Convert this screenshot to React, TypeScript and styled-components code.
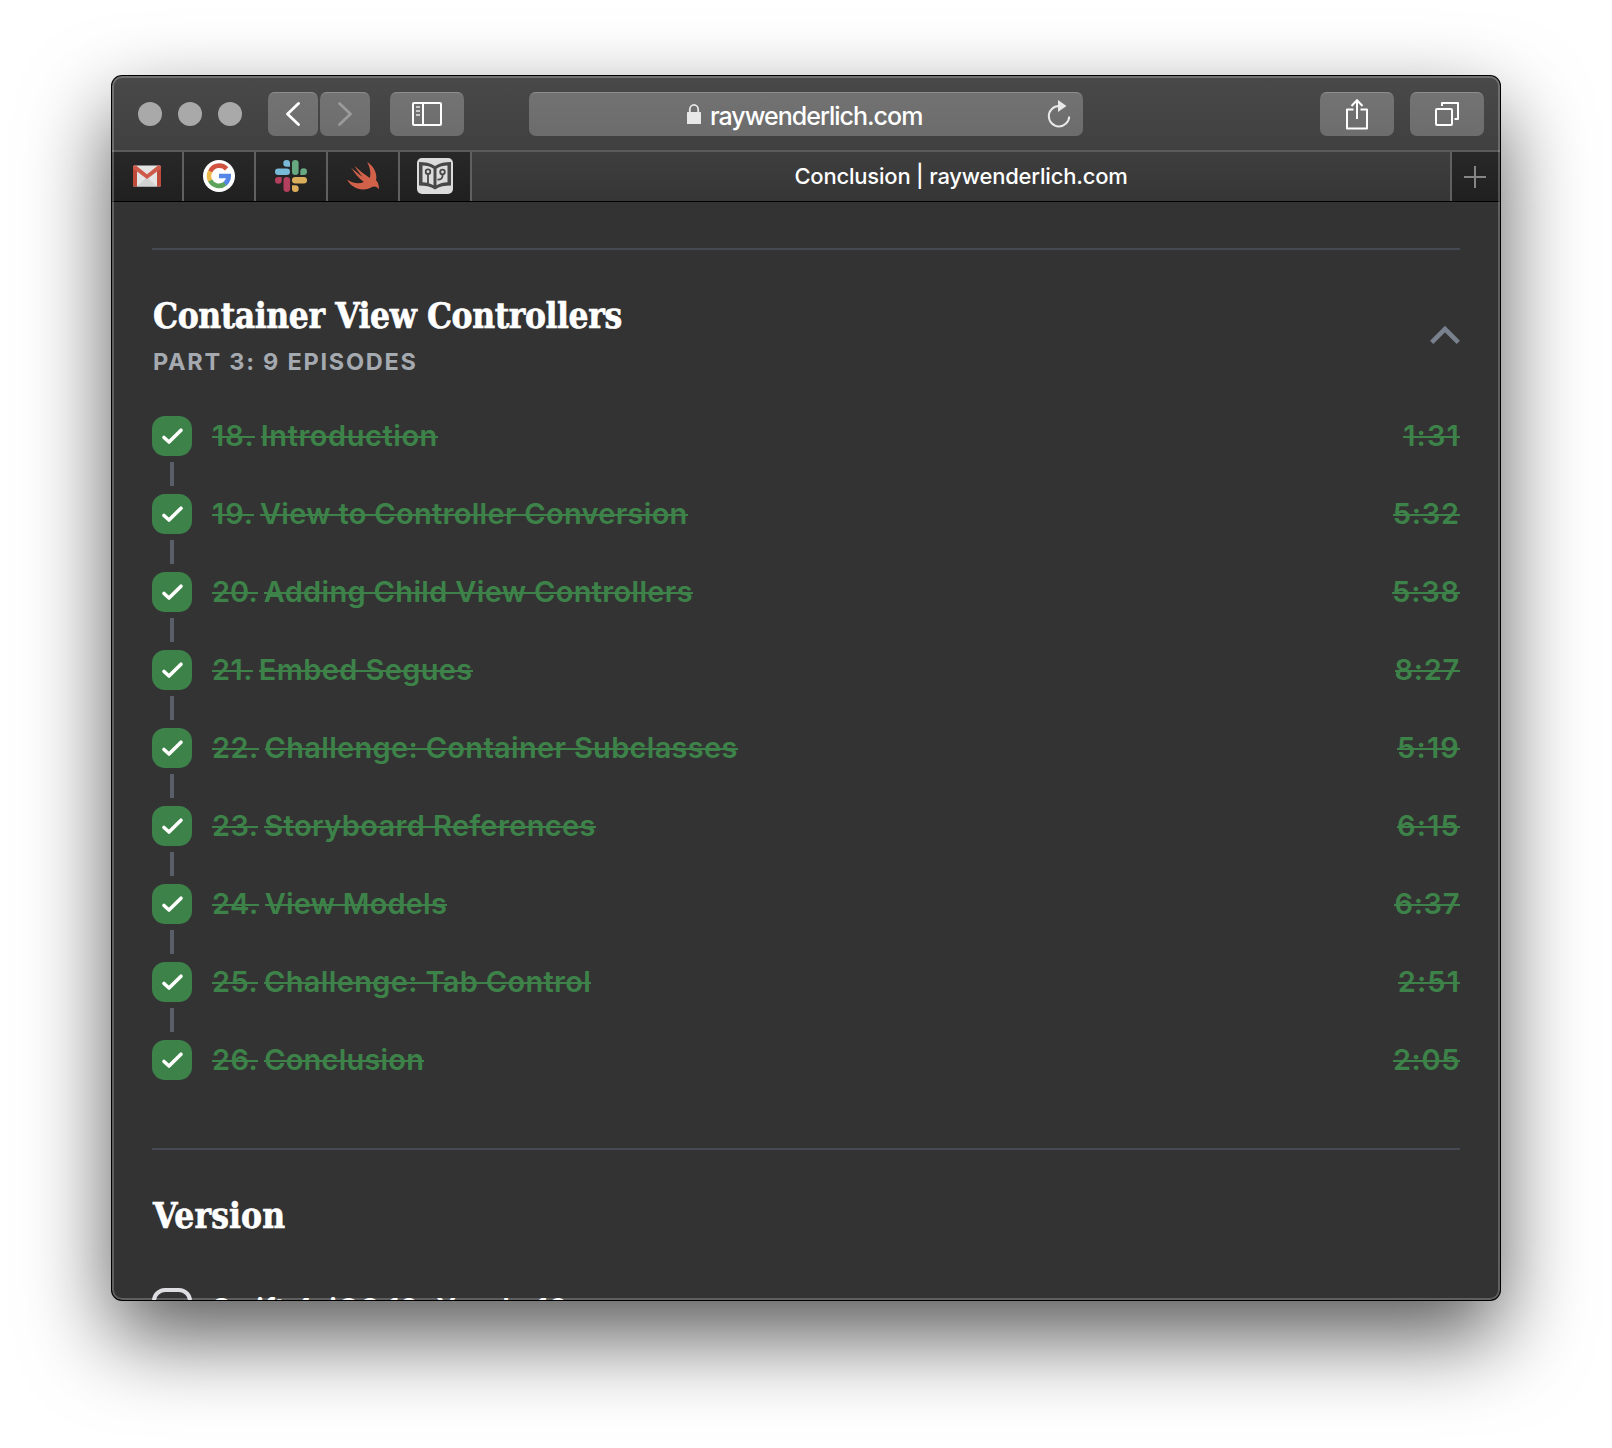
import React from "react";
import styled, { createGlobalStyle } from "styled-components";

const GlobalStyle = createGlobalStyle`
  * { box-sizing: border-box; }
  html, body { margin: 0; padding: 0; background: #fff; overflow: hidden; }
  body { font-family: Inter, "Liberation Sans", sans-serif; -webkit-font-smoothing: antialiased; }
`;

const Desktop = styled.div`
  width: 1612px;
  height: 1448px;
  padding: 76px 112px 148px;
  background: #fff;
  overflow: hidden;
`;

const BrowserWindow = styled.div`
  position: relative;
  display: flex;
  flex-direction: column;
  width: 1388px;
  height: 1224px;
  border-radius: 10px;
  overflow: hidden;
  background: #333;
  box-shadow: 0 0 0 1px #000, 0 36px 86px rgba(0, 0, 0, 0.66);

  &::after {
    content: "";
    position: absolute;
    inset: 0;
    border: 2px solid rgba(255, 255, 255, 0.22);
    border-radius: 10px;
    pointer-events: none;
  }
`;

const Toolbar = styled.header`
  display: flex;
  align-items: center;
  flex: none;
  height: 76px;
  padding: 0 16px 0 26px;
  background: linear-gradient(#494949, #404040);
  border-bottom: 2px solid #5a5a5a;
`;

const TrafficLights = styled.div`
  display: flex;
  gap: 16px;
  margin: 2px 26px 0 0;
`;

const Light = styled.span`
  width: 24px;
  height: 24px;
  border-radius: 50%;
  background: #a9a9a9;
`;

const ToolButton = styled.button<{ $w: number; $gap?: number }>`
  display: flex;
  align-items: center;
  justify-content: center;
  flex: none;
  width: ${(p) => p.$w}px;
  height: 44px;
  margin: 2px ${(p) => p.$gap ?? 0}px 0 0;
  padding: 0;
  border: 0;
  border-radius: 7px;
  background: linear-gradient(#737373, #6d6d6d);
  box-shadow: inset 0 2px 0 -1px #8d8d8d;
`;

const AddressBar = styled.div`
  display: flex;
  align-items: center;
  width: 554px;
  height: 44px;
  margin: 2px auto 0 65px;
  padding: 0 12px 0 158px;
  border-radius: 7px;
  background: linear-gradient(#727272, #6c6c6c);
  box-shadow: inset 0 2px 0 -1px #8d8d8d;
`;

const Host = styled.span`
  flex: 1;
  margin-left: 9px;
  padding-top: 3px;
  color: #fff;
  font-size: 25px;
  font-weight: 450;
  letter-spacing: -1px;
  white-space: nowrap;
`;

const TabBar = styled.nav`
  display: flex;
  flex: none;
  height: 50px;
  background: linear-gradient(#282828, #202020);
  border-bottom: 1px solid #000;
`;

const PinnedTab = styled.div`
  display: flex;
  align-items: center;
  justify-content: center;
  width: 72px;
  padding-bottom: 1px;
  border-right: 2px solid #606060;
`;

const ActiveTab = styled.div`
  display: flex;
  align-items: center;
  justify-content: center;
  flex: 1;
  padding: 0 0 2px;
  color: #fff;
  background: linear-gradient(#3e3e3e, #363636);
  border-right: 2px solid #606060;
  font-size: 22px;
  font-weight: 500;
  letter-spacing: -0.2px;
  white-space: nowrap;
`;

const NewTab = styled.div`
  display: flex;
  align-items: center;
  justify-content: center;
  width: 48px;
  padding-right: 2px;
`;

const Page = styled.main`
  flex: 1;
  min-height: 0;
  padding: 46px 40px 0;
  overflow: hidden;
`;

const Section = styled.section`
  border-top: 2px solid #444952;
`;

const SectionHeader = styled.div`
  display: flex;
  justify-content: space-between;
  height: 166px;
  padding-top: 44px;
`;

const Title = styled.h2<{ $spacing: number }>`
  margin: 0 0 0 1px;
  color: #fff;
  font-family: "DejaVu Serif Condensed", "DejaVu Serif", serif;
  font-size: 35px;
  font-weight: 700;
  font-stretch: condensed;
  line-height: 44px;
  letter-spacing: ${(p) => p.$spacing}px;
  white-space: nowrap;
  -webkit-text-stroke: 0.6px #fff;
`;

const Subtitle = styled.p`
  margin: 10px 0 0 1px;
  color: #a5a9b0;
  font-size: 23.500px;
  font-weight: 650;
  line-height: 28px;
  letter-spacing: 1.750px;
  white-space: nowrap;
`;

const Collapse = styled.div`
  padding-top: 31px;
  line-height: 0;
`;

const Episodes = styled.ol`
  margin: 0;
  padding: 0;
  height: 732px;
  list-style: none;
`;

const Episode = styled.li`
  position: relative;
  display: flex;
  align-items: center;
  height: 40px;
  margin-bottom: 38px;
  color: #3d8249;
  font-size: 29px;
  font-weight: 560;

  &:not(:last-child)::after {
    content: "";
    position: absolute;
    left: 18px;
    top: 46px;
    width: 4px;
    height: 24px;
    background: #5a5e68;
  }
`;

const Check = styled.span`
  display: flex;
  width: 40px;
  height: 40px;
  margin-right: 20px;
  border-radius: 13px;
  background: #3d8249;
`;

const Struck = styled.span<{ $spacing: number }>`
  letter-spacing: ${(p) => p.$spacing}px;
  line-height: 40px;
  white-space: nowrap;
  background: linear-gradient(currentColor, currentColor) 0 20px / 100% 2px no-repeat;
`;

const EpisodeName = styled.span`
  display: flex;
  flex: 1;
  gap: 6px;
`;

const VersionHeader = styled.div`
  height: 138px;
  padding-top: 44px;
`;

const VersionRow = styled.div`
  display: flex;
  align-items: center;
  height: 40px;
  gap: 20px;
  color: #fff;
  font-size: 29px;
  font-weight: 560;
  letter-spacing: 0.500px;
  white-space: nowrap;
`;

const EmptyBox = styled.span`
  width: 40px;
  height: 40px;
  border: 4px solid #dcdce1;
  border-radius: 13px;
`;

const episodes = [
  { n: 18, name: "Introduction", time: "1:31", ns: 1.1, s: 0.55, t: 1.15 },
  { n: 19, name: "View to Controller Conversion", time: "5:32", ns: 0.9, s: 0.3, t: 0.8 },
  { n: 20, name: "Adding Child View Controllers", time: "5:38", ns: 0, s: 0.33, t: 0.85 },
  { n: 21, name: "Embed Segues", time: "8:27", ns: 0.4, s: 0.38, t: 0.7 },
  { n: 22, name: "Challenge: Container Subclasses", time: "5:19", ns: 0.4, s: 0.31, t: 1.15 },
  { n: 23, name: "Storyboard References", time: "6:15", ns: 0.4, s: 0.37, t: 1.15 },
  { n: 24, name: "View Models", time: "6:37", ns: 0.5, s: 0.19, t: 0.65 },
  { n: 25, name: "Challenge: Tab Control", time: "2:51", ns: 0.4, s: 0.33, t: 1.1 },
  { n: 26, name: "Conclusion", time: "2:05", ns: 0.4, s: 0.2, t: 0.6 },
];

const GmailIcon = () => (
  <svg width="28" height="22" viewBox="0 0 28 22">
    <rect width="28" height="21" y="0.5" rx="1.5" fill="#e4e4e4" />
    <path d="M4 21.500 14 12l10 9.500z" fill="#d2d2d2" />
    <path d="M4 6v15.500H1.500A1.500 1.500 0 0 1 0 20V2zM24 6v15.500h2.500A1.500 1.500 0 0 0 28 20V2z" fill="#bd4a3b" />
    <path d="M0 2C0 1 .7.5 1.500.5H3l11 8.700L25 .5h1.500C27.300.5 28 1 28 2v1.500L14 14 0 3.500z" fill="#cf5a4a" />
  </svg>
);

const GoogleIcon = () => (
  <svg width="32" height="32" viewBox="0 0 32 32">
    <circle cx="16" cy="16" r="16" fill="#fff" />
    <g fill="none" strokeWidth="4.600">
      <path d="M23.600 8.800A10 10 0 0 0 7.200 11.600" stroke="#d0523f" />
      <path d="M7.200 11.400a10 10 0 0 0 0 9.300" stroke="#efb94a" />
      <path d="M7.100 20.500A10 10 0 0 0 22.300 23.600" stroke="#5ca35c" />
      <path d="M22 23.800A10 10 0 0 0 25.700 16H16" stroke="#5585e6" />
    </g>
  </svg>
);

const SlackIcon = () => (
  <svg width="32" height="32" viewBox="0 0 32 32">
    <g fill="#79b9d8">
      <rect x="0" y="8.500" width="15" height="6.600" rx="3.300" />
      <path d="M15 6.700h-3.300A3.350 3.350 0 1 1 15 3.300z" />
    </g>
    <g fill="#67a981">
      <rect x="17" y="0" width="6.600" height="15" rx="3.300" />
      <path d="M25.300 15v-3.300a3.350 3.350 0 1 1 3.400 3.300z" />
    </g>
    <g fill="#dbae5c">
      <rect x="17" y="17" width="15" height="6.600" rx="3.300" />
      <path d="M17 25.300h3.300a3.350 3.350 0 1 1-3.300 3.400z" />
    </g>
    <g fill="#b13f5d">
      <rect x="8.500" y="17" width="6.600" height="15" rx="3.300" />
      <path d="M6.700 17v3.300A3.350 3.350 0 1 1 3.300 17z" />
    </g>
  </svg>
);

const SwiftIcon = () => (
  <svg width="32" height="28" viewBox="0 0 32 28">
    <path
      d="M20.200 0c7.200 4.800 10.300 12 8.800 18 2.300 2.900 3.500 6.500 2.600 9.300-1.600-2.900-4.400-3.300-7-2C15.500 30.300 5 26.500 0 17.500c5 3.500 11.400 5.100 16.800 2.500C11.500 16 7.200 10.500 4 5.500c3.500 3.300 7.500 6.600 11.600 9.300C12.700 11.700 9.800 7.800 7.500 3.800c4.700 4.500 9.600 8.500 15.300 12.200C24 11.500 23.200 5.500 20.200 0z"
      fill="#d2614a"
    />
  </svg>
);

const BookIcon = () => (
  <svg width="36" height="36" viewBox="0 0 36 36">
    <rect width="36" height="36" rx="5" fill="#dcdcdc" />
    <path d="M2 4c6 0 11 .8 16 4 5-3.200 10-4 16-4v23.500c-6 0-11.500.800-16 4-4.500-3.200-10-4-16-4z" fill="#484848" />
    <path d="M5.500 7.500c4 .2 7.800 1 11 3.300v16.500c-3.400-2-7-2.800-11-3zM30.500 7.500c-4 .2-7.800 1-11 3.300v16.500c3.400-2 7-2.800 11-3z" fill="#dcdcdc" />
    <g fill="none" stroke="#484848" strokeWidth="1.800">
      <circle cx="11" cy="13.700" r="2.300" />
      <path d="M11 16v9.500" />
      <circle cx="25.500" cy="14" r="2.300" />
      <path d="M25.500 16.300v2c0 2.500-2.500 3.500-5 3.200" />
    </g>
  </svg>
);

export default function App() {
  return (
    <>
      <GlobalStyle />
      <Desktop>
        <BrowserWindow>
          <Toolbar>
            <TrafficLights>
              <Light />
              <Light />
              <Light />
            </TrafficLights>
            <ToolButton $w={50} $gap={2} aria-label="Back">
              <svg width="14" height="24" viewBox="0 0 14 24" fill="none" stroke="#fff" strokeWidth="2.800" strokeLinecap="round" strokeLinejoin="round">
                <path d="M12.500 1.500 1.500 12l11 10.500" />
              </svg>
            </ToolButton>
            <ToolButton $w={50} $gap={20} aria-label="Forward">
              <svg width="14" height="24" viewBox="0 0 14 24" fill="none" stroke="#9a9a9a" strokeWidth="2.800" strokeLinecap="round" strokeLinejoin="round">
                <path d="m1.500 1.500 11 10.500-11 10.500" />
              </svg>
            </ToolButton>
            <ToolButton $w={74} aria-label="Sidebar">
              <svg width="30" height="24" viewBox="0 0 30 24" fill="none" stroke="#fff" strokeWidth="2">
                <rect x="1" y="1" width="28" height="22" rx="1" />
                <path d="M11 1v22" />
                <path d="M4 5h4M4 9h4M4 13h4" stroke="#c8c8c8" />
              </svg>
            </ToolButton>
            <AddressBar>
              <svg width="14" height="20" viewBox="0 0 14 20">
                <path d="M2.800 9V5.500a4.200 4.600 0 0 1 8.400 0V9" fill="none" stroke="#e8e8e8" strokeWidth="1.800" />
                <rect y="8" width="14" height="12" rx="0.5" fill="#e8e8e8" />
              </svg>
              <Host>raywenderlich.com</Host>
              <svg width="24" height="28" viewBox="0 0 24 28">
                <path d="M12 6a10.200 10.200 0 1 0 10.200 10.500" fill="none" stroke="#e8e8e8" strokeWidth="2" />
                <path d="M11 0v12l8.500-6z" fill="#e8e8e8" />
              </svg>
            </AddressBar>
            <ToolButton $w={74} $gap={16} aria-label="Share">
              <svg width="24" height="32" viewBox="0 0 24 32" fill="none" stroke="#fff" strokeWidth="2">
                <path d="M8.500 11.500H2v19h20v-19h-6.500" strokeLinejoin="round" />
                <path d="M12 21V2.500M6.500 8 12 2.200 17.500 8" />
              </svg>
            </ToolButton>
            <ToolButton $w={74} aria-label="Show tabs">
              <svg width="24" height="24" viewBox="0 0 24 24" fill="none" stroke="#fff" strokeWidth="2" strokeLinejoin="round">
                <rect x="1" y="7" width="16" height="16" rx="1" />
                <path d="M7 4V1h16v16h-3.500" />
              </svg>
            </ToolButton>
          </Toolbar>
          <TabBar>
            <PinnedTab><GmailIcon /></PinnedTab>
            <PinnedTab><GoogleIcon /></PinnedTab>
            <PinnedTab><SlackIcon /></PinnedTab>
            <PinnedTab><SwiftIcon /></PinnedTab>
            <PinnedTab><BookIcon /></PinnedTab>
            <ActiveTab>Conclusion | raywenderlich.com</ActiveTab>
            <NewTab>
              <svg width="22" height="22" viewBox="0 0 22 22" stroke="#858585" strokeWidth="2">
                <path d="M11 0v22M0 11h22" />
              </svg>
            </NewTab>
          </TabBar>
          <Page>
            <Section>
              <SectionHeader>
                <div>
                  <Title $spacing={-0.42}>Container View Controllers</Title>
                  <Subtitle>PART 3: 9 EPISODES</Subtitle>
                </div>
                <Collapse>
                  <svg width="30" height="20" viewBox="0 0 30 20" fill="none" stroke="#7a818e" strokeWidth="4.600">
                    <path d="M1.700 17.300 15 4l13.300 13.300" />
                  </svg>
                </Collapse>
              </SectionHeader>
              <Episodes>
                {episodes.map((e) => (
                  <Episode key={e.n}>
                    <Check>
                      <svg width="40" height="40" viewBox="0 0 40 40" fill="none" stroke="#fff" strokeWidth="3.600" strokeLinecap="round" strokeLinejoin="round">
                        <path d="m12 21.500 5 4.500L29 14.200" />
                      </svg>
                    </Check>
                    <EpisodeName>
                      <Struck $spacing={e.ns}>{e.n}.</Struck>
                      <Struck $spacing={e.s}>{e.name}</Struck>
                    </EpisodeName>
                    <Struck $spacing={e.t}>{e.time}</Struck>
                  </Episode>
                ))}
              </Episodes>
            </Section>
            <Section>
              <VersionHeader>
                <Title $spacing={0.1}>Version</Title>
              </VersionHeader>
              <VersionRow>
                <EmptyBox />
                <span>Swift 4, iOS 12, Xcode 10</span>
              </VersionRow>
            </Section>
          </Page>
        </BrowserWindow>
      </Desktop>
    </>
  );
}
